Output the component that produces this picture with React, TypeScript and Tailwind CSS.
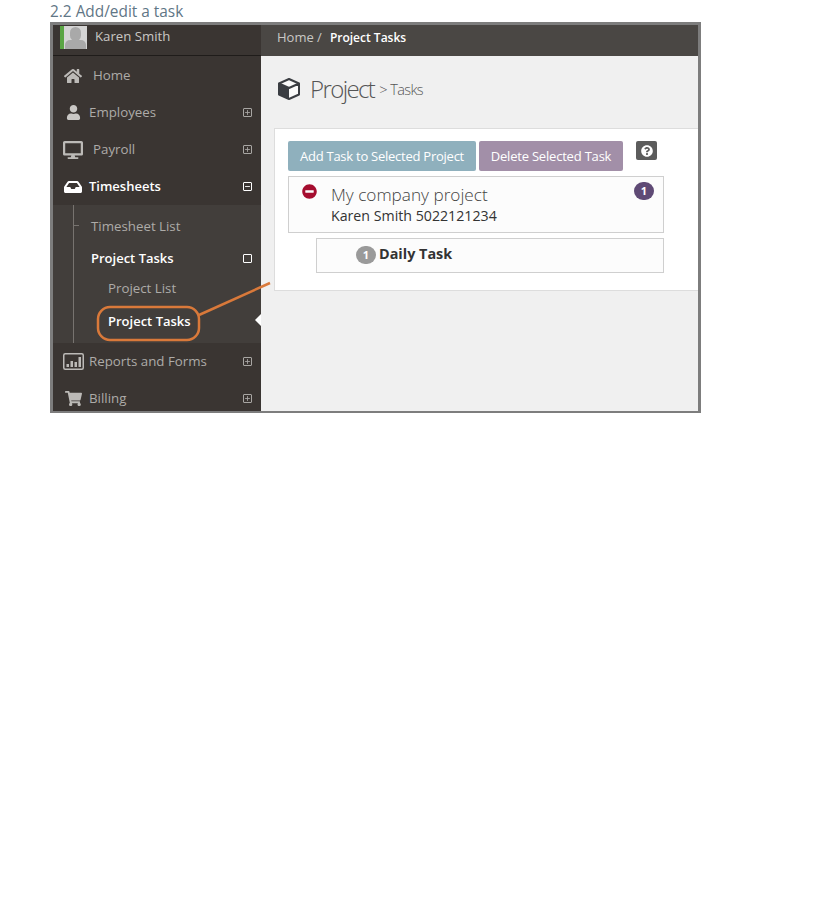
import { Minus, Plus } from "lucide-react";
import { FaDesktop, FaHome, FaInbox, FaMinusCircle, FaQuestionCircle, FaShoppingCart, FaUser } from "react-icons/fa";
import type { ReactNode } from "react";

function Toggle({ kind }: { kind: "plus" | "minus" | "empty" }) {
  const dim = kind === "plus";
  return (
    <span className={`flex h-[9px] w-[9px] items-center justify-center rounded-[1px] border ${dim ? "border-[#a8a6a3]" : "border-white"}`}>
      {kind === "plus" && <Plus size={7} strokeWidth={3} className="text-[#a8a6a3]" />}
      {kind === "minus" && <Minus size={7} strokeWidth={3} className="text-white" />}
    </span>
  );
}

function ReportIcon() {
  return (
    <svg width="21" height="17" viewBox="0 0 21 17" fill="none">
      <rect x="0.75" y="0.75" width="19.5" height="15.5" rx="1.5" stroke="#bcbab7" strokeWidth="1.5" />
      <path d="M3.5 11h2.5v3H3.5zM7.5 8h2.5v6H7.5zM11.5 9h2.5v5h-2.5zM15.5 4H18v10h-2.5z" fill="#bcbab7" />
    </svg>
  );
}

function CubeIcon() {
  return (
    <svg width="24" height="24" viewBox="0 0 24 24" fill="none">
      <path d="M12 2 22 6.5V17.5L12 22 2 17.5V6.5Z" fill="#fafafa" />
      <path d="M2 6.5 12 11V22L2 17.5Z" fill="#3a3d42" />
      <path d="M12 2 22 6.5V17.5L12 22 2 17.5V6.5Z M2 6.5 12 11 22 6.5" stroke="#3a3d42" strokeWidth="2" strokeLinejoin="round" />
    </svg>
  );
}

function NavItem({ icon, label, active, indent, toggle }: { icon: ReactNode; label: string; active?: boolean; indent?: string; toggle?: "plus" | "minus" }) {
  return (
    <div className={`flex h-[37px] shrink-0 items-center pt-[2px] ${active ? "text-[13px] font-semibold text-white" : "text-[13.3px] text-[#adaba8]"}`}>
      <span className="flex w-[40px] shrink-0 justify-center">{icon}</span>
      <span className={`flex-1 ${indent ?? ""}`}>{label}</span>
      {toggle && <span className="mr-[9px]"><Toggle kind={toggle} /></span>}
    </div>
  );
}

export default function App() {
  return (
    <div className="min-h-[918px] bg-white font-['Open_Sans',sans-serif]">
      <h2 className="ml-[50px] h-[22px] pt-[1px] text-[15.4px] leading-[21px] text-[#5f7686]">2.2 Add/edit a task</h2>

      <div className="relative ml-[50px] flex h-[391px] w-[651px] overflow-hidden border-[3px] border-b-2 border-[#7d7d7d]">
        <aside className="flex w-[208px] shrink-0 flex-col overflow-hidden bg-[#3a3532]">
          <div className="flex h-[31px] shrink-0 items-center border-b border-[#1f1c1a] pb-[6px] pl-[7px] text-[13.2px] text-[#c9c7c4]">
            <span className="h-[23px] w-[4px] bg-[#5aa544]" />
            <span className="relative h-[23px] w-[23px] overflow-hidden bg-[#d4d4d4]">
              <span className="absolute left-[6px] top-[1px] h-[14px] w-[11px] rounded-full bg-[#a9a9a9]" />
              <span className="absolute left-[1px] top-[14px] h-[10px] w-[21px] rounded-t-[5px] bg-[#a9a9a9]" />
            </span>
            <span className="ml-[8px]">Karen Smith</span>
          </div>

          <NavItem icon={<FaHome size={18} className="text-[#bcbab7]" />} label="Home" />
          <NavItem icon={<FaUser size={15} className="text-[#c9c7c4]" />} label="Employees" indent="-ml-[4px]" toggle="plus" />
          <NavItem icon={<FaDesktop size={20} className="text-[#bcbab7]" />} label="Payroll" toggle="plus" />
          <NavItem icon={<FaInbox size={18} className="text-white" />} label="Timesheets" indent="-ml-[4px]" active toggle="minus" />

          <div className="relative -mb-[1px] mt-[1px] h-[138px] shrink-0 bg-[#423e3b] text-[13.3px]">
            <span className="absolute bottom-0 left-[20px] top-0 w-px bg-[#77736f]" />
            <span className="absolute left-[20px] top-[20px] h-px w-[6px] bg-[#77736f]" />
            <div className="flex h-[31px] items-center pl-[38px] pt-[13px] text-[#adaba8]">Timesheet List</div>
            <div className="flex h-[31px] items-center justify-between pl-[38px] pr-[9px] pt-[14px] text-[13px] font-semibold text-white">
              Project Tasks
              <Toggle kind="empty" />
            </div>
            <div className="flex h-[31px] items-center pl-[55px] pt-[13px] text-[#adaba8]">Project List</div>
            <div className="flex h-[31px] items-center pl-[55px] pt-[16px] text-[13px] font-semibold text-white">Project Tasks</div>
            <span className="absolute right-0 top-[109px] h-0 w-0 border-y-[6px] border-r-[6px] border-y-transparent border-r-white" />
          </div>

          <NavItem icon={<ReportIcon />} label="Reports and Forms" indent="-ml-[4px]" toggle="plus" />
          <NavItem icon={<FaShoppingCart size={17} className="text-[#bcbab7]" />} label="Billing" indent="-ml-[4px]" toggle="plus" />
        </aside>

        <main className="flex-1 bg-[#f0f0f0]">
          <div className="flex h-[31px] items-center bg-[#4a4744] pb-[6px] pl-[16px] text-[13px] text-[#c9c7c4]">
            Home /<span className="ml-[8px] text-[12px] font-semibold text-white">Project Tasks</span>
          </div>

          <div className="flex h-[72px] items-center pb-[7px] pl-[16px] font-light text-[#555]">
            <CubeIcon />
            <span className="ml-[9px] text-[24px] tracking-[-1.6px]">Project</span>
            <span className="ml-[5px] mt-[3px] text-[14.5px] tracking-[-0.6px]">&gt; Tasks</span>
          </div>

          <section className="ml-[13px] h-[163px] border border-r-0 border-[#dddddd] bg-white pl-[13px] pt-[12px]">
            <div className="flex items-start">
              <button className="h-[30px] w-[188px] rounded-[2px] bg-[#8fb0bd] pt-[2px] text-[13px] tracking-[-0.25px] text-white">Add Task to Selected Project</button>
              <button className="ml-[3px] h-[30px] w-[144px] rounded-[2px] bg-[#a28fa8] pt-[2px] text-[13px] tracking-[-0.2px] text-white">Delete Selected Task</button>
              <span className="ml-[13px] flex h-[19px] w-[21px] items-center justify-center rounded-[2px] bg-[#5c5c5c]">
                <FaQuestionCircle size={12} className="text-white" />
              </span>
            </div>

            <div className="relative mt-[5px] h-[57px] w-[376px] border border-[#cfcfcf] bg-[#fcfcfc] pl-[42px] pt-[6px]">
              <FaMinusCircle size={15} className="absolute left-[13px] top-[7px] text-[#a50d2f]" />
              <div className="text-[17.2px] font-light leading-[23px] text-[#444]">My company project</div>
              <div className="text-[14.2px] leading-[19px] text-[#333]">Karen Smith 5022121234</div>
              <span className="absolute right-[9px] top-[5px] flex h-[18px] w-[20px] items-center justify-center rounded-full bg-[#5f4a75] text-[11px] font-bold text-white">1</span>
            </div>

            <div className="ml-[28px] mt-[5px] flex h-[35px] w-[348px] items-center border border-[#cfcfcf] bg-[#fcfcfc] pb-[3px] pl-[39px]">
              <span className="mt-[2px] flex h-[18px] w-[20px] items-center justify-center rounded-full bg-[#9a9a9a] text-[11px] font-bold text-white">1</span>
              <span className="ml-[3px] text-[14.4px] font-bold text-[#333]">Daily Task</span>
            </div>
          </section>
        </main>

        <svg className="pointer-events-none absolute left-0 top-0" width="645" height="386" fill="none">
          <rect x="45" y="282" width="101" height="33" rx="12" stroke="#d9793a" strokeWidth="2.5" />
          <path d="M146 290 L217 258" stroke="#d9793a" strokeWidth="2.5" />
        </svg>
      </div>
    </div>
  );
}
